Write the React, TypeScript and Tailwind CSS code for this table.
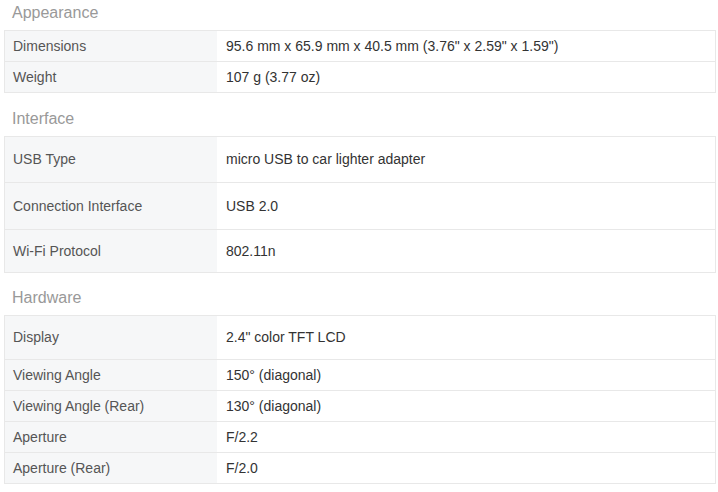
const sections = [
  {
    title: "Appearance",
    gap: "",
    rows: [
      { label: "Dimensions", value: "95.6 mm x 65.9 mm x 40.5 mm (3.76\" x 2.59\" x 1.59\")", h: "h-[30px]" },
      { label: "Weight", value: "107 g (3.77 oz)", h: "h-[30px]" },
    ],
  },
  {
    title: "Interface",
    gap: "mt-[13px]",
    rows: [
      { label: "USB Type", value: "micro USB to car lighter adapter", h: "h-[45px]" },
      { label: "Connection Interface", value: "USB 2.0", h: "h-[46px]" },
      { label: "Wi-Fi Protocol", value: "802.11n", h: "h-[42px]" },
    ],
  },
  {
    title: "Hardware",
    gap: "mt-[12px]",
    rows: [
      { label: "Display", value: "2.4\" color TFT LCD", h: "h-[43px]" },
      { label: "Viewing Angle", value: "150° (diagonal)", h: "h-[30px]" },
      { label: "Viewing Angle (Rear)", value: "130° (diagonal)", h: "h-[30px]" },
      { label: "Aperture", value: "F/2.2", h: "h-[30px]" },
      { label: "Aperture (Rear)", value: "F/2.0", h: "h-[30px]" },
    ],
  },
];

export default function App() {
  return (
    <div className="w-[718px] h-[492px] bg-white overflow-hidden font-['Liberation_Sans',Arial,sans-serif]">
      {sections.map((section) => (
        <div key={section.title} className={section.gap}>
          {/* section heading */}
          <h3 className="pt-[4px] pb-[8px] pl-[12px] text-[16px] leading-[18px] text-[#999]">
            {section.title}
          </h3>
          <div className="ml-[4px] w-[712px] border border-[#e8e8e8]">
            {section.rows.map((row, i) => (
              <div
                key={row.label}
                className={`flex ${row.h} ${i > 0 ? "border-t border-[#e8e8e8] box-content" : ""}`}
              >
                <div className="w-[212px] bg-[#f6f7f8] flex items-center pl-[8px] text-[14px] text-[#555]">
                  {row.label}
                </div>
                <div className="flex-1 flex items-center pl-[9px] text-[14px] text-[#333]">
                  {row.value}
                </div>
              </div>
            ))}
          </div>
        </div>
      ))}
    </div>
  );
}
